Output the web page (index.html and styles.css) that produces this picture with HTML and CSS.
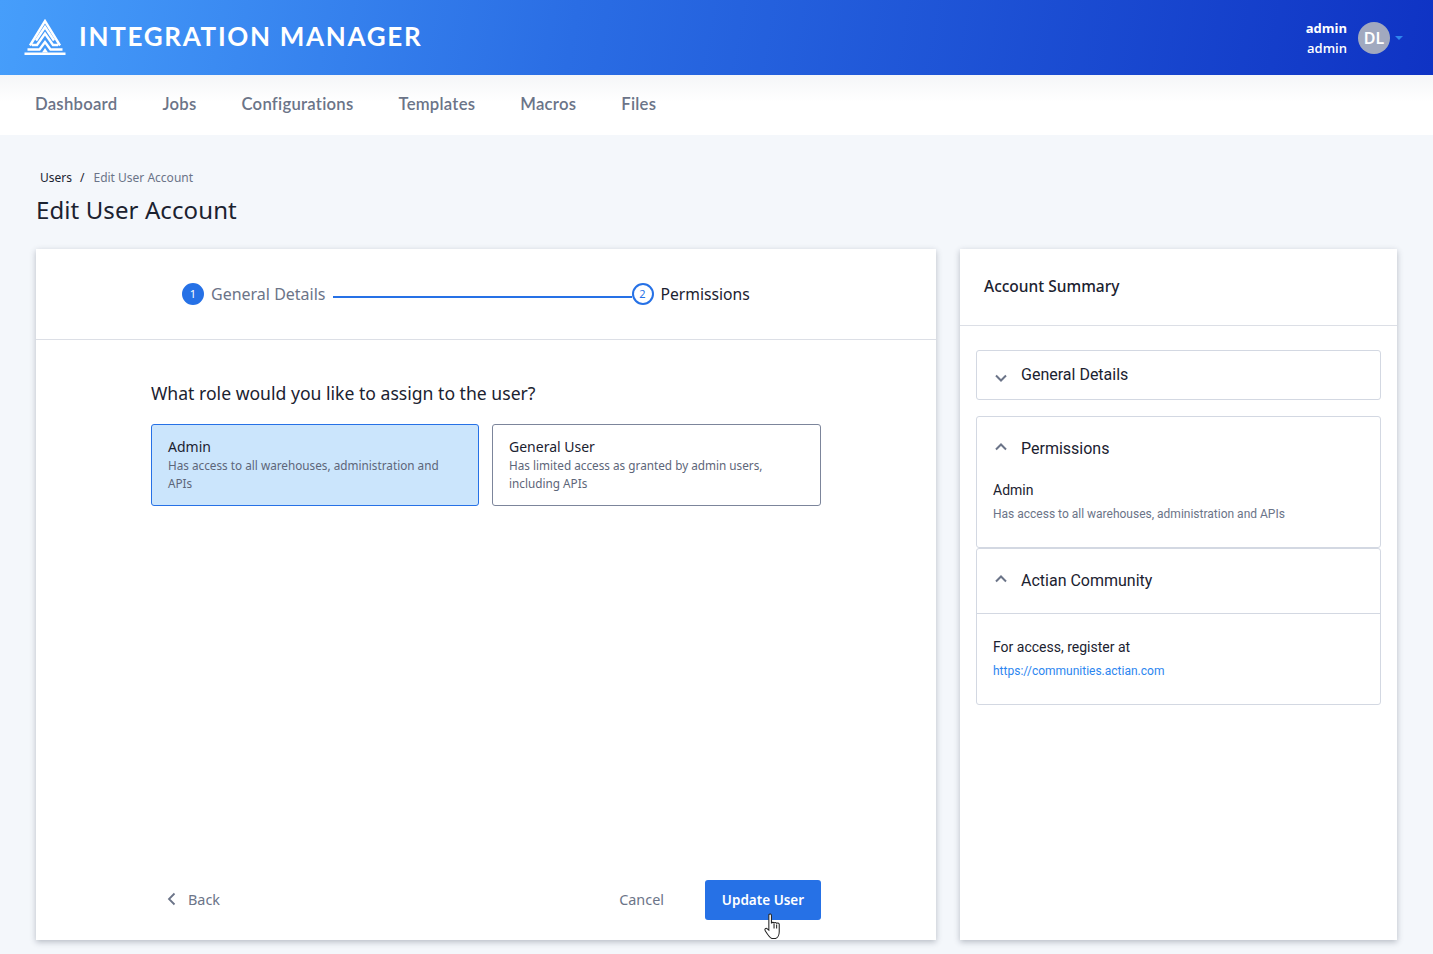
FILE: index.html
```html
<!DOCTYPE html>
<html lang="en">
<head>
  <meta charset="UTF-8">
  <title>Edit User Account</title>
  <link rel="stylesheet" href="styles.css">
</head>
<body>
  <header class="topbar">
    <div class="brand">
      <svg class="logo" viewBox="0 0 42 37" width="42" height="37" fill="none" stroke="#fff" stroke-width="2.400">
        <path d="M0.500 34.800H41.500"/>
        <path d="M3.500 30.500H15.500L21 23L26.500 30.500H38.500"/>
        <path d="M8 26H13L21 14.500L29 26H34"/>
        <path d="M12 21.500L21 8L30 21.500"/>
        <path d="M6 26.500L21 2L36 26.500"/>
        <path d="M21 29L18 33.500H24Z" fill="#fff" stroke="none"/>
      </svg>
      <span class="brand-name">INTEGRATION MANAGER</span>
    </div>
    <div class="user">
      <div class="user-names">
        <span class="user-first">admin</span>
        <span>admin</span>
      </div>
      <div class="avatar">DL</div>
      <span class="caret"></span>
    </div>
  </header>

  <nav class="mainnav">
    <a href="#">Dashboard</a>
    <a href="#">Jobs</a>
    <a href="#">Configurations</a>
    <a href="#">Templates</a>
    <a href="#">Macros</a>
    <a href="#">Files</a>
  </nav>

  <main class="page">
    <div class="crumbs">
      <a href="#">Users</a>
      <span class="crumb-sep">/</span>
      <span class="crumb-current">Edit User Account</span>
    </div>
    <h1>Edit User Account</h1>

    <div class="columns">
      <section class="card wizard">
        <div class="steps">
          <span class="step-num done">1</span>
          <span class="step-label muted">General Details</span>
          <span class="step-line"></span>
          <span class="step-num active">2</span>
          <span class="step-label">Permissions</span>
        </div>

        <div class="wizard-body">
          <h2>What role would you like to assign to the user?</h2>
          <div class="roles">
            <div class="role selected">
              <div class="role-title">Admin</div>
              <div class="role-desc">Has access to all warehouses, administration and APIs</div>
            </div>
            <div class="role">
              <div class="role-title">General User</div>
              <div class="role-desc">Has limited access as granted by admin users, including APIs</div>
            </div>
          </div>
        </div>

        <div class="wizard-foot">
          <a class="back" href="#">
            <svg viewBox="0 0 10 14" width="10" height="14" fill="none" stroke="#6b7488" stroke-width="1.800"><path d="M7.500 1.500L2 7L7.500 12.500"/></svg>
            Back
          </a>
          <a class="cancel" href="#">Cancel</a>
          <button class="primary">Update User</button>
          <svg class="cursor" viewBox="0 0 18 26" width="20" height="27" fill="#fff" stroke="#222" stroke-width="1">
            <path d="M5 1.500c1 -1 2.400 -.6 2.500 1V10c.2 -1.300 2.300 -1.300 2.500 0 .2 -1.200 2.300 -1.200 2.500 .2 .3 -1 2.300 -.9 2.500 .6V18c0 3 -1.500 6 -3.500 6.500H8C6 24 4 21 1.500 17c-1 -1.500 .6 -3 2 -1.800L5 16.500Z"/>
            <path d="M10 10.500V15M12.500 11V15" fill="none"/>
          </svg>
        </div>
      </section>

      <aside class="card summary">
        <div class="summary-head">Account Summary</div>
        <div class="summary-body">
          <div class="acc acc-closed">
            <div class="acc-head">
              <svg class="chev down" viewBox="0 0 12 8" width="12" height="8" fill="none" stroke="#6b7488" stroke-width="2"><path d="M1 1.500L6 6.500L11 1.500"/></svg>
              General Details
            </div>
          </div>

          <div class="acc acc-perm">
            <div class="acc-head">
              <svg class="chev" viewBox="0 0 12 8" width="12" height="8" fill="none" stroke="#6b7488" stroke-width="2"><path d="M1 6.500L6 1.500L11 6.500"/></svg>
              Permissions
            </div>
            <div class="acc-text">
              <div class="acc-title">Admin</div>
              <div class="acc-desc">Has access to all warehouses, administration and APIs</div>
            </div>
          </div>

          <div class="acc acc-comm">
            <div class="acc-head ruled">
              <svg class="chev" viewBox="0 0 12 8" width="12" height="8" fill="none" stroke="#6b7488" stroke-width="2"><path d="M1 6.500L6 1.500L11 6.500"/></svg>
              Actian Community
            </div>
            <div class="acc-text">
              <div class="acc-title">For access, register at</div>
              <a class="acc-link" href="#">https://communities.actian.com</a>
            </div>
          </div>
        </div>
      </aside>
    </div>
  </main>
</body>
</html>
```

FILE: styles.css
```css
* {
  box-sizing: border-box;
}
body {
  margin: 0;
  height: 954px;
  overflow: hidden;
  background: #f4f7fb;
  font-family: 'Noto Sans', sans-serif;
  color: #1b2230;
}
a {
  text-decoration: none;
  color: inherit;
}

.topbar {
  height: 75px;
  padding: 0 30px 0 24px;
  display: flex;
  justify-content: space-between;
  align-items: center;
  background: linear-gradient(100deg, #469efb 0%, #2a6de4 40%, #0f33c4 100%);
  color: #fff;
}
.brand {
  display: flex;
  align-items: center;
  gap: 13px;
}
.logo {
  display: block;
}
.brand-name {
  margin-bottom: 4px;
  font-family: Lato, sans-serif;
  font-weight: 700;
  font-size: 26px;
  letter-spacing: 1.7px;
}
.user {
  display: flex;
  align-items: center;
  margin-top: 1px;
}
.user-names {
  display: flex;
  flex-direction: column;
  align-items: flex-end;
  font-family: 'Open Sans', sans-serif;
  font-size: 13px;
  font-weight: 600;
  line-height: 20px;
  margin-right: 11px;
}
.user-first {
  font-weight: 700;
}
.avatar {
  width: 32px;
  height: 32px;
  border-radius: 50%;
  background: #a1a9bf;
  font-size: 16px;
  font-weight: 600;
  line-height: 32px;
  text-align: center;
}
.caret {
  margin-left: 5px;
  border-left: 4px solid transparent;
  border-right: 4px solid transparent;
  border-top: 4px solid #2f86ee;
}

.mainnav {
  height: 60px;
  padding: 0 0 3px 35px;
  display: flex;
  align-items: center;
  gap: 45px;
  background: linear-gradient(#f5f6f8, #fff 45%);
  font-family: Lato, sans-serif;
  font-weight: 600;
  font-size: 16.700px;
  letter-spacing: .25px;
  color: #6b7488;
}

.page {
  padding: 34px 36px 0;
}
.crumbs {
  margin-left: 4px;
  display: flex;
  align-items: center;
  font-size: 12px;
  line-height: 18px;
}
.crumb-sep {
  margin: 0 9px 0 8px;
}
.crumb-current {
  color: #6b7488;
}
h1 {
  margin: 7px 0 23px;
  font-size: 24px;
  line-height: 32px;
  font-weight: 400;
  letter-spacing: .1px;
}

.columns {
  display: flex;
  gap: 24px;
}
.card {
  height: 691px;
  background: #fff;
  box-shadow: 0 2px 6px rgba(40, 50, 70, .3);
}

.wizard {
  width: 900px;
  display: flex;
  flex-direction: column;
}
.steps {
  height: 91px;
  padding: 0 0 0 146px;
  display: flex;
  align-items: center;
  border-bottom: 1px solid #dcdfe6;
}
.step-num {
  width: 22px;
  height: 22px;
  border-radius: 50%;
  border: 2px solid #2671e6;
  font-size: 11px;
  line-height: 18px;
  text-align: center;
  color: #2671e6;
}
.step-num.done {
  background: #2671e6;
  color: #fff;
}
.step-label {
  margin-left: 7px;
  font-size: 15.700px;
}
.step-label.muted {
  font-size: 16px;
  color: #6b7488;
}
.step-line {
  width: 299px;
  height: 2px;
  margin: 5px 0 0 7px;
  background: #2671e6;
}

.wizard-body {
  flex: 1;
  padding: 41px 115px 0;
}
h2 {
  margin: 0 0 19px;
  font-size: 17.600px;
  line-height: 24px;
  font-weight: 400;
}
.roles {
  display: flex;
  gap: 13px;
}
.role {
  width: 329px;
  height: 82px;
  padding: 12px 16px 0;
  border: 1px solid #7c859b;
  border-radius: 3px;
}
.role.selected {
  width: 328px;
  background: #cbe5fc;
  border-color: #2671e6;
}
.role-title {
  font-size: 14px;
  line-height: 19px;
}
.role-desc {
  font-size: 11.750px;
  line-height: 18px;
  color: #5d6679;
}

.wizard-foot {
  position: relative;
  height: 60px;
  padding: 0 115px 20px 131px;
  display: flex;
  align-items: center;
  font-size: 14px;
  color: #6b7488;
}
.back, .cancel {
  padding-bottom: 2px;
}
.back {
  display: flex;
  align-items: center;
  gap: 11px;
  margin-right: auto;
  font-size: 14.400px;
}
.cancel {
  font-size: 14.400px;
}
.primary {
  width: 116px;
  height: 40px;
  margin-left: 41px;
  padding: 0;
  border: none;
  border-radius: 3px;
  background: #2671e6;
  color: #fff;
  font-family: inherit;
  font-size: 13.500px;
  font-weight: 600;
}
.cursor {
  position: absolute;
  left: 727px;
  top: 33px;
}

.summary {
  width: 437px;
  font-family: Roboto, sans-serif;
}
.summary-head {
  height: 77px;
  padding: 27px 24px 0;
  border-bottom: 1px solid #dcdfe6;
  font-family: 'Noto Sans', sans-serif;
  font-size: 15.500px;
  line-height: 20px;
  font-weight: 500;
}
.summary-body {
  padding: 24px 16px;
}
.acc {
  border: 1px solid #d3d8e2;
  border-radius: 3px;
}
.acc-closed {
  height: 50px;
  margin-bottom: 16px;
}
.acc-closed .acc-head {
  padding-top: 14px;
}
.acc-perm {
  height: 132px;
}
.acc-head {
  padding: 22px 0 0 44px;
  position: relative;
  font-size: 16px;
  line-height: 20px;
}
.acc-head.ruled {
  height: 65px;
  border-bottom: 1px solid #d3d8e2;
}
.chev {
  position: absolute;
  left: 18px;
  top: 26px;
}
.chev.down {
  top: 23px;
}
.acc-text {
  padding: 0 16px;
}
.acc-perm .acc-text {
  padding-top: 21px;
}
.acc-comm .acc-text {
  padding-top: 23px;
}
.acc-comm {
  height: 157px;
}
.acc-title {
  font-size: 14px;
  line-height: 20px;
}
.acc-desc, .acc-link {
  display: block;
  margin-top: 5px;
  font-size: 12px;
  line-height: 18px;
  color: #6b7488;
}
.acc-link {
  color: #2c86f0;
}
```
